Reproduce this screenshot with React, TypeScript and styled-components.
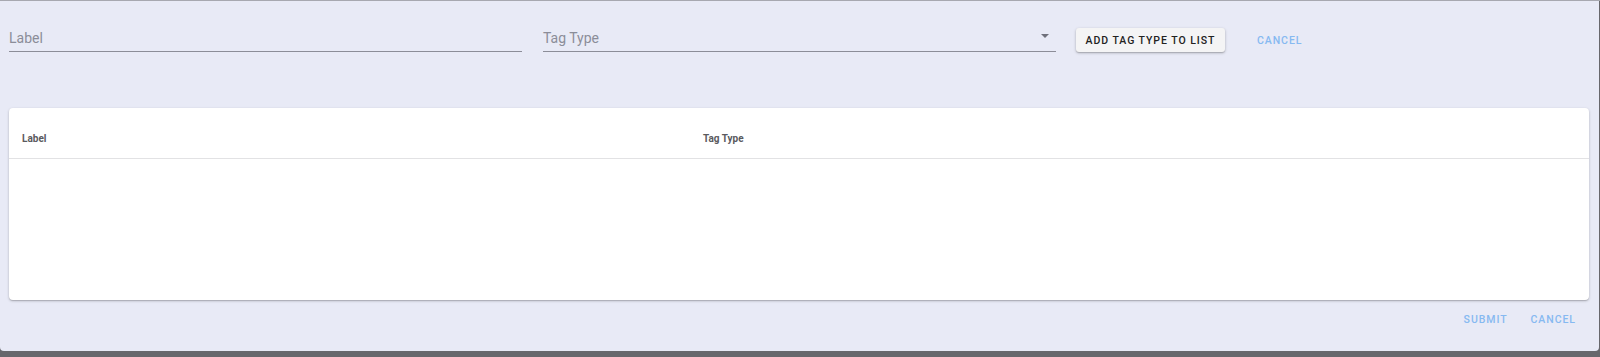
import React from "react";
import styled, { createGlobalStyle } from "styled-components";

const Global = createGlobalStyle`
  html, body { margin: 0; padding: 0; }
  body {
    background: #67676c;
    font-family: Roboto, "Noto Sans", "Liberation Sans", sans-serif;
    overflow: hidden;
  }
`;

const Page = styled.div`
  height: 357px;
  display: flex;
  flex-direction: column;
`;

const Backdrop = styled.div`
  height: 1px;
  background: #a7a8b0;
`;

const Dialog = styled.div`
  width: 1599px;
  height: 350px;
  box-sizing: border-box;
  background: #e8eaf6;
  border-radius: 0 0 4px 4px;
  padding: 20px 10px 0 9px;
  display: flex;
  flex-direction: column;
`;

const FormRow = styled.div`
  display: flex;
  align-items: flex-start;
`;

const Field = styled.div<{ $gap?: number }>`
  width: 513px;
  height: 31px;
  margin-right: ${(p) => p.$gap ?? 0}px;
  border-bottom: 1px solid #8c8d98;
  display: flex;
  align-items: center;
  justify-content: space-between;
  color: #8b8d99;
  font-size: 14px;
  font-weight: 400;
  padding-top: 4px;
  box-sizing: border-box;
`;

const Arrow = styled.span`
  width: 0;
  height: 0;
  border-left: 4px solid transparent;
  border-right: 4px solid transparent;
  border-top: 4px solid #6f707b;
  margin-right: 7px;
  margin-bottom: 4px;
`;

const RaisedButton = styled.button`
  margin-top: 7px;
  height: 24px;
  width: 149px;
  padding: 0;
  border: none;
  border-radius: 3px;
  background: #f4f4f5;
  box-shadow: 0 1px 3px rgba(0, 0, 0, 0.25), 0 1px 1px rgba(0, 0, 0, 0.12);
  color: #222;
  font-family: Roboto, "Liberation Sans", sans-serif;
  font-size: 10.5px;
  font-weight: 500;
  letter-spacing: 0.95px;
  text-transform: uppercase;
  display: flex;
  align-items: center;
  justify-content: center;
`;

const TextButton = styled.button<{ $ml?: number }>`
  margin-top: 7px;
  margin-left: ${(p) => p.$ml ?? 0}px;
  height: 24px;
  padding: 0;
  border: none;
  background: transparent;
  color: #86b9f1;
  font-family: Roboto, "Liberation Sans", sans-serif;
  font-size: 10.5px;
  font-weight: 500;
  letter-spacing: 0.95px;
  text-transform: uppercase;
`;

const Card = styled.div`
  margin-top: 56px;
  width: 1580px;
  height: 192px;
  background: #fff;
  border-radius: 4px;
  box-shadow: 0 1px 3px rgba(0, 0, 0, 0.2), 0 1px 1px rgba(0, 0, 0, 0.14);
  display: flex;
  flex-direction: column;
`;

const HeaderRow = styled.div`
  height: 51px;
  box-sizing: border-box;
  padding: 10px 0 0 13px;
  display: grid;
  grid-template-columns: 681px 1fr;
  align-items: center;
  border-bottom: 1px solid #e2e2e4;
`;

const HeadCell = styled.div`
  font-size: 10px;
  font-weight: 700;
  color: #5a5a5e;
`;

const Actions = styled.div`
  display: flex;
  justify-content: flex-end;
  padding-right: 13px;
`;

export default function App() {
  return (
    <Page>
      <Global />
      <Backdrop />
      <Dialog>
        <FormRow>
          <Field $gap={21}>Label</Field>
          <Field $gap={20}>
            Tag Type
            <Arrow />
          </Field>
          <RaisedButton>Add Tag Type to List</RaisedButton>
          <TextButton $ml={32}>Cancel</TextButton>
        </FormRow>
        <Card>
          <HeaderRow>
            <HeadCell>Label</HeadCell>
            <HeadCell>Tag Type</HeadCell>
          </HeaderRow>
        </Card>
        <Actions>
          <TextButton>Submit</TextButton>
          <TextButton $ml={23}>Cancel</TextButton>
        </Actions>
      </Dialog>
    </Page>
  );
}
